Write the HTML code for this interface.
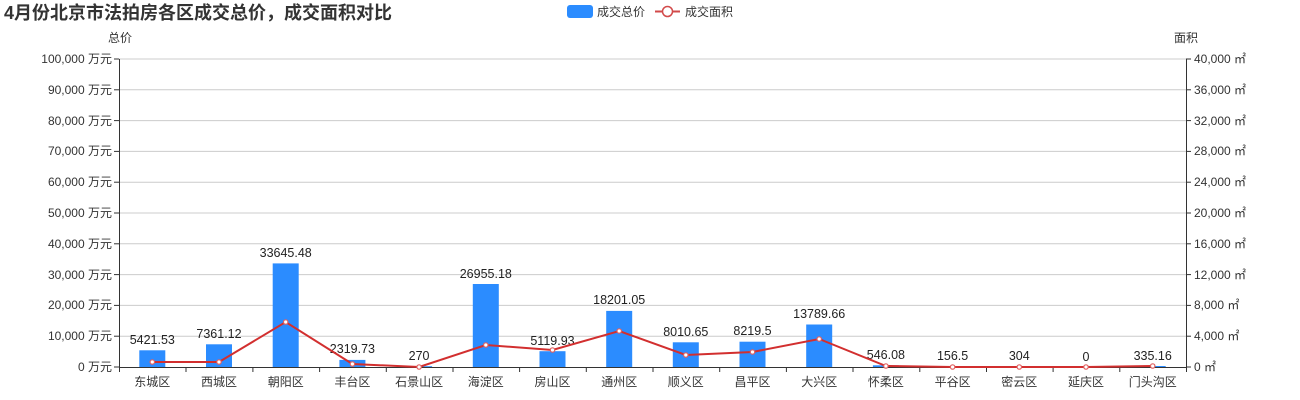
<!DOCTYPE html>
<html><head><meta charset="utf-8"><style>
body{margin:0;background:#fff;width:1300px;height:400px;overflow:hidden}
svg{display:block;font-family:"Liberation Sans","Noto Sans CJK SC",sans-serif}
</style></head><body>
<svg width="1300" height="400" xmlns="http://www.w3.org/2000/svg">
<text x="4" y="19" font-size="18" font-weight="bold" fill="#333">4月份北京市法拍房各区成交总价，成交面积对比</text>
<rect x="567" y="5" width="26" height="13" rx="3" fill="#2b8cff"/>
<text x="597" y="16" font-size="12" fill="#333">成交总价</text>
<line x1="655" y1="11.5" x2="680" y2="11.5" stroke="#d24a4a" stroke-width="2"/>
<circle cx="667.5" cy="11.5" r="5" fill="#fff" stroke="#d24a4a" stroke-width="1.5"/>
<text x="685" y="16" font-size="12" fill="#333">成交面积</text>
<text x="108" y="42" font-size="12" fill="#333">总价</text>
<text x="1174" y="42" font-size="12" fill="#333">面积</text>
<g stroke="#ccc" stroke-width="1">
<line x1="119" x2="1186" y1="336.2" y2="336.2"/><line x1="119" x2="1186" y1="305.4" y2="305.4"/>
<line x1="119" x2="1186" y1="274.6" y2="274.6"/><line x1="119" x2="1186" y1="243.8" y2="243.8"/>
<line x1="119" x2="1186" y1="213" y2="213"/><line x1="119" x2="1186" y1="182.2" y2="182.2"/>
<line x1="119" x2="1186" y1="151.4" y2="151.4"/><line x1="119" x2="1186" y1="120.6" y2="120.6"/>
<line x1="119" x2="1186" y1="89.8" y2="89.8"/><line x1="119" x2="1186" y1="59" y2="59"/>
</g>
<g font-size="12" fill="#333" text-anchor="end">
<text x="112" y="371">0 万元</text><text x="112" y="340">10,000 万元</text><text x="112" y="309">20,000 万元</text>
<text x="112" y="279">30,000 万元</text><text x="112" y="248">40,000 万元</text><text x="112" y="217">50,000 万元</text>
<text x="112" y="186">60,000 万元</text><text x="112" y="155">70,000 万元</text><text x="112" y="125">80,000 万元</text>
<text x="112" y="94">90,000 万元</text><text x="112" y="63">100,000 万元</text>
</g>
<g font-size="12" fill="#333">
<text x="1194" y="371">0 ㎡</text><text x="1194" y="340">4,000 ㎡</text><text x="1194" y="309">8,000 ㎡</text>
<text x="1194" y="279">12,000 ㎡</text><text x="1194" y="248">16,000 ㎡</text><text x="1194" y="217">20,000 ㎡</text>
<text x="1194" y="186">24,000 ㎡</text><text x="1194" y="155">28,000 ㎡</text><text x="1194" y="125">32,000 ㎡</text>
<text x="1194" y="94">36,000 ㎡</text><text x="1194" y="63">40,000 ㎡</text>
</g>
<g stroke="#333" stroke-width="1">
<line x1="119.5" y1="59" x2="119.5" y2="367"/><line x1="1186.5" y1="59" x2="1186.5" y2="367"/>
<g><line x1="114" x2="119" y1="367" y2="367"/><line x1="114" x2="119" y1="336.2" y2="336.2"/><line x1="114" x2="119" y1="305.4" y2="305.4"/><line x1="114" x2="119" y1="274.6" y2="274.6"/><line x1="114" x2="119" y1="243.8" y2="243.8"/><line x1="114" x2="119" y1="213" y2="213"/><line x1="114" x2="119" y1="182.2" y2="182.2"/><line x1="114" x2="119" y1="151.4" y2="151.4"/><line x1="114" x2="119" y1="120.6" y2="120.6"/><line x1="114" x2="119" y1="89.8" y2="89.8"/><line x1="114" x2="119" y1="59" y2="59"/></g>
<g><line x1="1186" x2="1191" y1="367" y2="367"/><line x1="1186" x2="1191" y1="336.2" y2="336.2"/><line x1="1186" x2="1191" y1="305.4" y2="305.4"/><line x1="1186" x2="1191" y1="274.6" y2="274.6"/><line x1="1186" x2="1191" y1="243.8" y2="243.8"/><line x1="1186" x2="1191" y1="213" y2="213"/><line x1="1186" x2="1191" y1="182.2" y2="182.2"/><line x1="1186" x2="1191" y1="151.4" y2="151.4"/><line x1="1186" x2="1191" y1="120.6" y2="120.6"/><line x1="1186" x2="1191" y1="89.8" y2="89.8"/><line x1="1186" x2="1191" y1="59" y2="59"/></g>
</g>
<g fill="#2b8cff">
<rect x="139.3" y="350.3" width="26" height="16.7"/><rect x="206" y="344.3" width="26" height="22.7"/>
<rect x="272.7" y="263.4" width="26" height="103.6"/><rect x="339.4" y="359.9" width="26" height="7.1"/>
<rect x="406.1" y="366.2" width="26" height="0.8"/><rect x="472.8" y="284" width="26" height="83"/>
<rect x="539.5" y="351.2" width="26" height="15.8"/><rect x="606.2" y="310.9" width="26" height="56.1"/>
<rect x="672.8" y="342.3" width="26" height="24.7"/><rect x="739.5" y="341.7" width="26" height="25.3"/>
<rect x="806.2" y="324.5" width="26" height="42.5"/><rect x="872.9" y="365.3" width="26" height="1.7"/>
<rect x="939.6" y="366.5" width="26" height="0.5"/><rect x="1006.3" y="366.1" width="26" height="0.9"/>
<rect x="1139.7" y="366" width="26" height="1"/>
</g>
<line x1="119" y1="367.5" x2="1186" y2="367.5" stroke="#333"/>
<g stroke="#333"><line x1="119.5" x2="119.5" y1="367" y2="372"/><line x1="186" x2="186" y1="367" y2="372"/><line x1="252.9" x2="252.9" y1="367" y2="372"/><line x1="319.6" x2="319.6" y1="367" y2="372"/><line x1="386.3" x2="386.3" y1="367" y2="372"/><line x1="453" x2="453" y1="367" y2="372"/><line x1="519.6" x2="519.6" y1="367" y2="372"/><line x1="586.3" x2="586.3" y1="367" y2="372"/><line x1="653" x2="653" y1="367" y2="372"/><line x1="719.7" x2="719.7" y1="367" y2="372"/><line x1="786.4" x2="786.4" y1="367" y2="372"/><line x1="853" x2="853" y1="367" y2="372"/><line x1="919.8" x2="919.8" y1="367" y2="372"/><line x1="986.5" x2="986.5" y1="367" y2="372"/><line x1="1053.1" x2="1053.1" y1="367" y2="372"/><line x1="1119.8" x2="1119.8" y1="367" y2="372"/><line x1="1186.5" x2="1186.5" y1="367" y2="372"/></g>
<g font-size="12" fill="#333" text-anchor="middle">
<text x="152.3" y="386">东城区</text><text x="219" y="386">西城区</text><text x="285.7" y="386">朝阳区</text><text x="352.4" y="386">丰台区</text>
<text x="419.1" y="386">石景山区</text><text x="485.8" y="386">海淀区</text><text x="552.5" y="386">房山区</text><text x="619.2" y="386">通州区</text>
<text x="685.8" y="386">顺义区</text><text x="752.5" y="386">昌平区</text><text x="819.2" y="386">大兴区</text><text x="885.9" y="386">怀柔区</text>
<text x="952.6" y="386">平谷区</text><text x="1019.3" y="386">密云区</text><text x="1086" y="386">延庆区</text><text x="1152.7" y="386">门头沟区</text>
</g>
<g font-size="12.5" fill="#222" text-anchor="middle">
<text x="152.3" y="344">5421.53</text><text x="219" y="338">7361.12</text><text x="285.7" y="257">33645.48</text>
<text x="352.4" y="353">2319.73</text><text x="419.1" y="360">270</text><text x="485.8" y="278">26955.18</text>
<text x="552.5" y="345">5119.93</text><text x="619.2" y="304">18201.05</text><text x="685.8" y="336">8010.65</text>
<text x="752.5" y="335">8219.5</text><text x="819.2" y="318">13789.66</text><text x="885.9" y="359">546.08</text>
<text x="952.6" y="360">156.5</text><text x="1019.3" y="360">304</text><text x="1086" y="361">0</text><text x="1152.7" y="360">335.16</text>
</g>
<polyline fill="none" stroke="#d22f2f" stroke-width="2" points="152.3,362 219,362 285.7,322 352.4,364 419.1,367 485.8,345 552.5,350 619.2,331 685.8,355 752.5,352 819.2,339 885.9,366 952.6,367 1019.3,367 1086,367 1152.7,366"/>
<g fill="#fff" stroke="#e06060" stroke-width="1.2">
<circle cx="152.3" cy="362" r="2.2"/><circle cx="219" cy="362" r="2.2"/><circle cx="285.7" cy="322" r="2.2"/><circle cx="352.4" cy="364" r="2.2"/>
<circle cx="419.1" cy="367" r="2.2"/><circle cx="485.8" cy="345" r="2.2"/><circle cx="552.5" cy="350" r="2.2"/><circle cx="619.2" cy="331" r="2.2"/>
<circle cx="685.8" cy="355" r="2.2"/><circle cx="752.5" cy="352" r="2.2"/><circle cx="819.2" cy="339" r="2.2"/><circle cx="885.9" cy="366" r="2.2"/>
<circle cx="952.6" cy="367" r="2.2"/><circle cx="1019.3" cy="367" r="2.2"/><circle cx="1086" cy="367" r="2.2"/><circle cx="1152.7" cy="366" r="2.2"/>
</g>
</svg>
</body></html>
